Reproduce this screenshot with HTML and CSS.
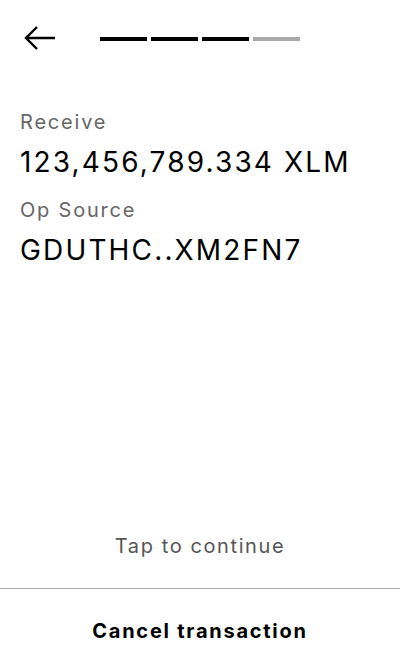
FILE: index.html
```html
<!DOCTYPE html>
<html>
<head>
<meta charset="utf-8">
<link rel="stylesheet" href="styles.css">
</head>
<body>
<div class="screen">
  <header class="top">
    <button class="back" aria-label="Back">
      <svg width="34" height="28" viewBox="0 0 34 28"><path d="M32 13H3M14 2L3 13l11 11" fill="none" stroke="#000" stroke-width="2.4"/></svg>
    </button>
    <div class="progress">
      <span class="seg on"></span><span class="seg on"></span><span class="seg on"></span><span class="seg"></span>
    </div>
  </header>
  <main class="content">
    <div class="label">Receive</div>
    <div class="value">123,456,789.334 XLM</div>
    <div class="label">Op Source</div>
    <div class="value">GDUTHC..XM2FN7</div>
  </main>
  <div class="tap">Tap to continue</div>
  <footer class="footer">
    <button class="cancel">Cancel transaction</button>
  </footer>
</div>
</body>
</html>
```
FILE: styles.css
```css
* { box-sizing: border-box; }
html, body { margin: 0; padding: 0; background: #fff; }
body { font-family: Inter, "Noto Sans", sans-serif; color: #000; }
.screen { width: 400px; height: 672px; display: flex; flex-direction: column; }
.top { display: flex; align-items: center; height: 78px; padding: 0 0 0 23px; }
.back { border: 0; background: none; padding: 0; width: 34px; height: 28px; display: flex; }
.progress { display: flex; gap: 4px; margin-left: 43px; }
.seg { width: 47px; height: 4px; background: #aaa; }
.seg.on { background: #000; }
.content { padding: 30px 20px 0; flex: 1; }
.label { font-size: 20px; color: #666; line-height: 28px; margin-bottom: 6px; letter-spacing: 1.8px; }
.value { font-size: 28px; line-height: 40px; margin-bottom: 14px; letter-spacing: 2.15px; }
.tap { text-align: center; font-size: 20px; color: #555; padding-bottom: 30px; letter-spacing: 1.6px; }
.footer { border-top: 1px solid #aaa; height: 84px; display: flex; align-items: center; justify-content: center; }
.cancel { border: 0; background: none; font-family: Inter, sans-serif; font-size: 20px; font-weight: 700; letter-spacing: 1.75px; color: #000; padding: 0; }
```
